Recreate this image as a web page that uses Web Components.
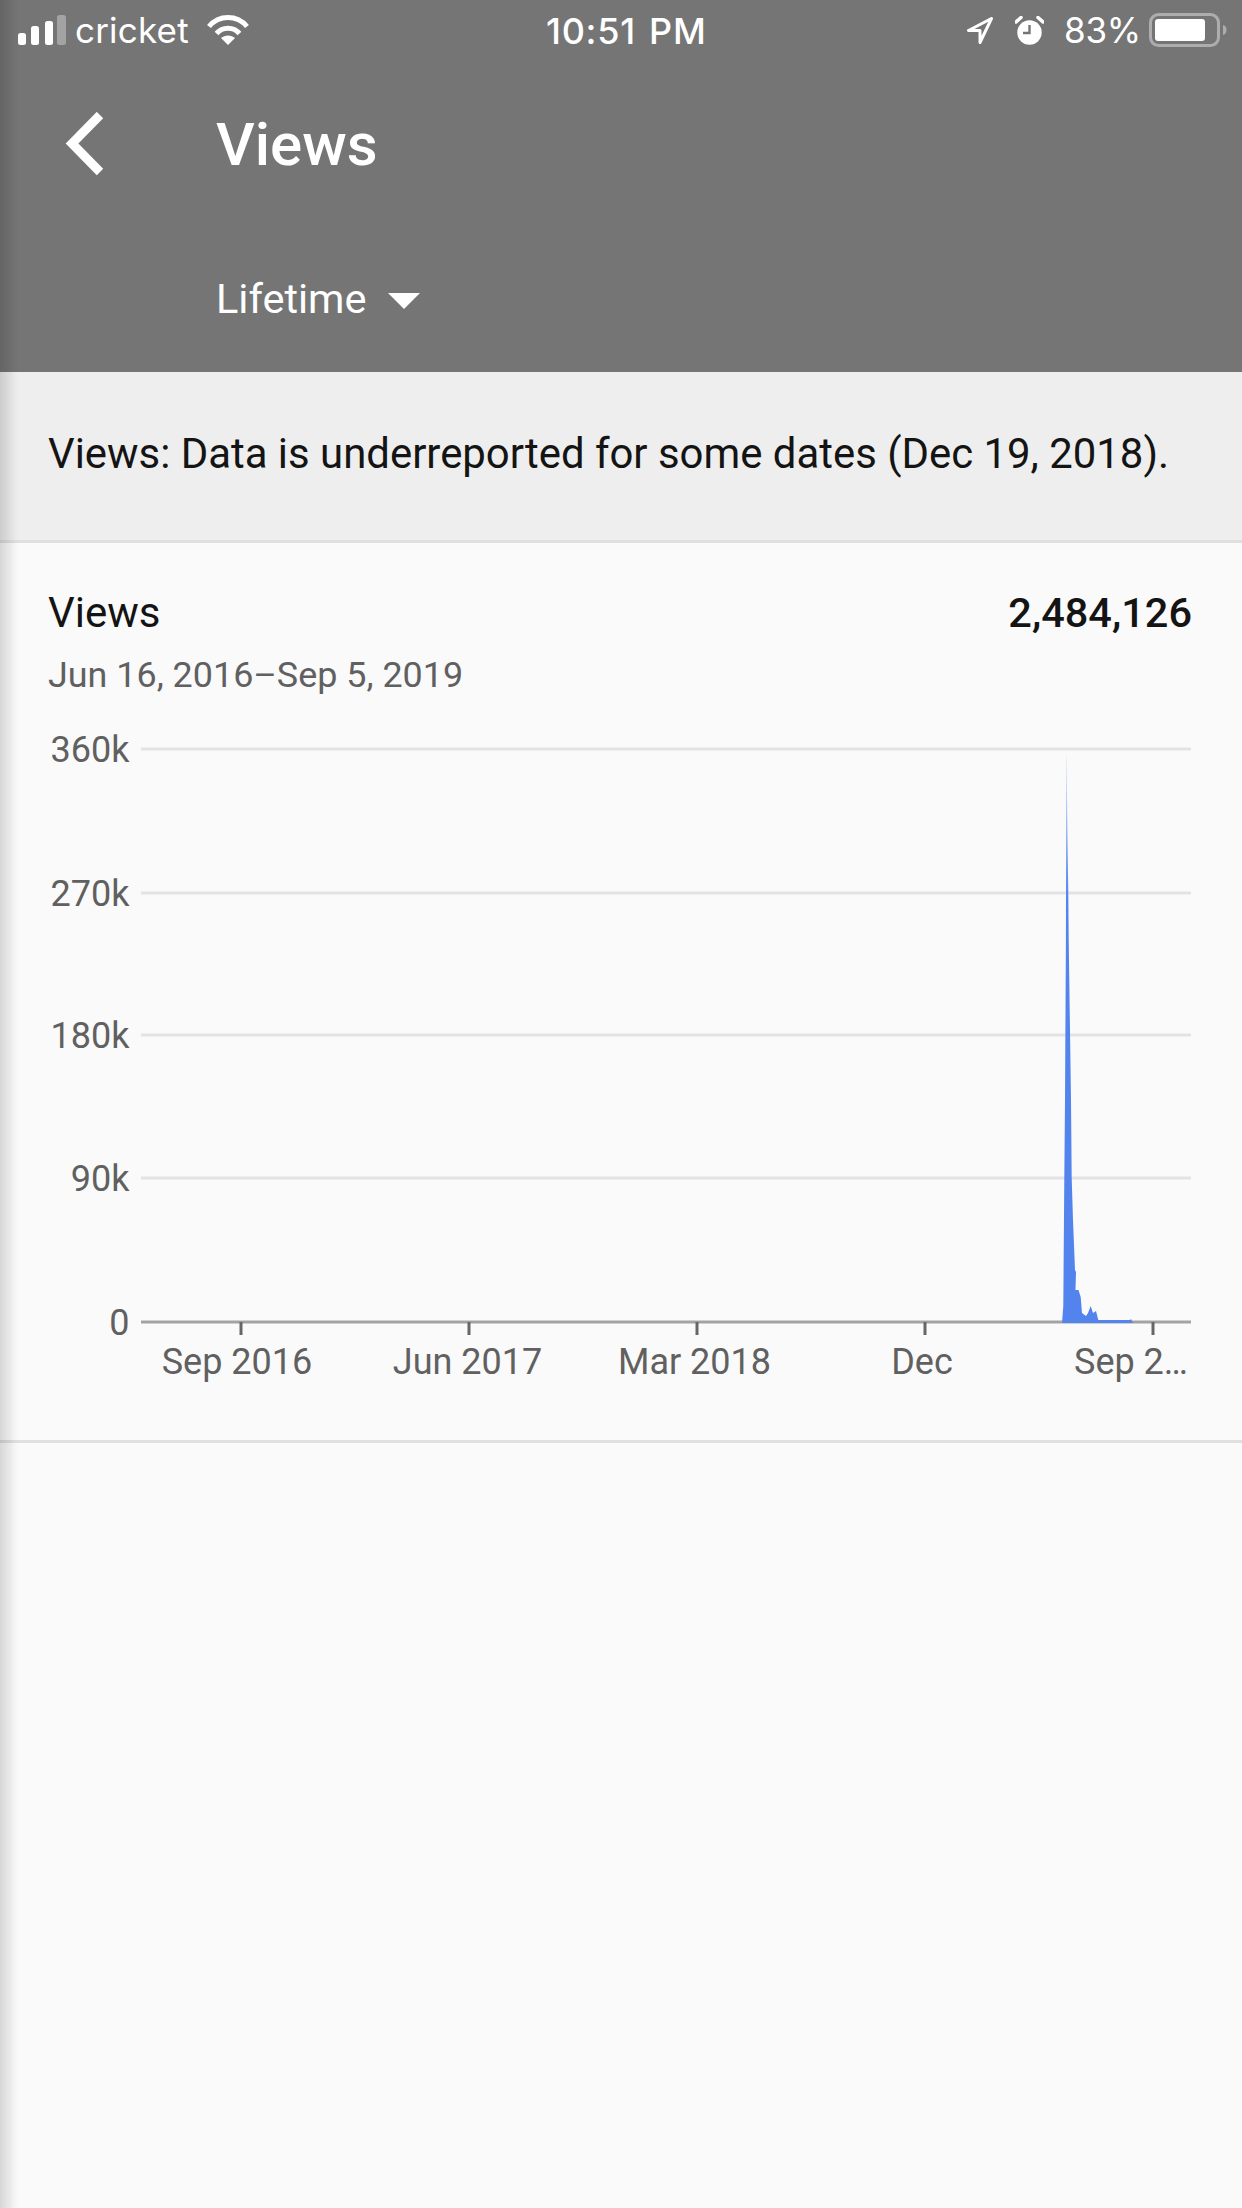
<!DOCTYPE html>
<html lang="en"><head><meta charset="utf-8"><title>Views</title>
<style>
html,body{margin:0;padding:0;background:#fafafa}
body{width:1242px;height:2208px;overflow:hidden;position:relative;font-family:Roboto,"Liberation Sans",sans-serif}
</style></head><body>
<app-screen>
  <status-bar slot="status" carrier="cricket" time="10:51 PM" battery="83%"></status-bar>
  <app-header slot="header" title="Views" range="Lifetime"></app-header>
  <notice-banner>Views: Data is underreported for some dates (Dec 19, 2018).</notice-banner>
  <stat-card label="Views" value="2,484,126" dates="Jun 16, 2016–Sep 5, 2019"><views-chart></views-chart></stat-card>
</app-screen>
<script>
function def(name, html){
  customElements.define(name, class extends HTMLElement{
    constructor(){super();this.attachShadow({mode:'open'});}
    connectedCallback(){this.shadowRoot.innerHTML=html(this);}
  });
}
def('app-screen',()=>`<style>
:host{display:block;position:relative;width:1242px;height:2208px;background:#fafafa}
.top{background:#757575}
.edge{position:absolute;left:0;top:0;bottom:0;width:20px;pointer-events:none;background:linear-gradient(90deg,rgba(0,0,0,.14),rgba(0,0,0,.09) 35%,rgba(0,0,0,.02) 75%,rgba(0,0,0,0))}
</style><div class="top"><slot name="status"></slot><slot name="header"></slot></div><slot></slot><div class="edge"></div>`);
def('status-bar',h=>`<style>
:host{display:flex;align-items:center;height:60px;padding:0 15px 0 18px;box-sizing:border-box;position:relative;color:#fff;font:400 35px Inter,Roboto,sans-serif}
.l,.r{display:flex;align-items:center}
.l{flex:1}.r{flex:1;justify-content:flex-end}
.t{font-weight:500;font-size:36px;letter-spacing:.7px;word-spacing:3px;white-space:nowrap;position:absolute;left:546px;top:9px}
svg{display:block}
.car{margin:0 18px 0 9px;letter-spacing:.2px}
.pct{margin:0 8px 0 20px;letter-spacing:-.2px}
</style>
<div class="l">
<svg width="48" height="30" viewBox="0 0 48 30"><rect x="0" y="18" width="8" height="12" rx="2.5" fill="#fff"/><rect x="13" y="11" width="8" height="19" rx="2.5" fill="#fff"/><rect x="27" y="6" width="8" height="24" rx="2.5" fill="#fff"/><rect x="39" y="0" width="9" height="30" rx="2.5" fill="#a3a3a3"/></svg>
<span class="car">${h.getAttribute('carrier')}</span>
<svg width="42" height="30" viewBox="0 0 42 30" fill="none" stroke="#fff" stroke-width="5"><path d="M2 11.5C12-.5 30-.5 40 11.5"/><path d="M9.5 18.5C15.500 11.500 26.500 11.500 32.500 18.500"/><path d="M21 30l-7-7c4-3.500 10-3.500 14 0z" fill="#fff" stroke="none"/></svg>
</div>
<div class="t">${h.getAttribute('time')}</div>
<div class="r">
<svg width="26" height="27" viewBox="0 0 26 27" fill="none" stroke="#fff" stroke-width="3" stroke-linejoin="round"><path d="M24.500 1.500L1.500 13.500H13V25.500Z"/></svg>
<svg style="margin-left:22px" width="29" height="29" viewBox="0 0 29 29"><circle cx="14.500" cy="16.500" r="12.200" fill="#fff"/><path d="M14.500 9v8H8" fill="none" stroke="#757575" stroke-width="2.400"/><path d="M1 6L6 1.500M28 6L23 1.500" stroke="#fff" stroke-width="3.500" stroke-linecap="round"/></svg>
<span class="pct">${h.getAttribute('battery')}</span>
<svg width="78" height="34" viewBox="0 0 78 34"><rect x="1.500" y="1.500" width="68" height="31" rx="8" fill="none" stroke="#adadad" stroke-width="3"/><rect x="6" y="6" width="50" height="22" rx="3" fill="#fff"/><path d="M74 12c2.500.5 3.500 2.500 3.500 5s-1 4.500-3.500 5z" fill="#adadad"/></svg>
</div>`);
def('app-header',h=>`<style>
:host{display:block;height:312px;box-sizing:border-box;padding-top:42px;color:#fff;position:relative}
.row1{display:flex;align-items:center;height:84px}
.back{width:216px;display:flex;padding-left:64px;box-sizing:border-box}
svg{display:block}
.title{font:500 60px Roboto,sans-serif}
.row2{display:flex;align-items:center;margin:77px 0 0 216px;height:70px;font:400 41.500px Roboto,sans-serif}
.row2 svg{margin:5px 0 0 22px}
</style>
<div class="row1"><div class="back"><svg width="44" height="64" viewBox="0 0 44 64" fill="none" stroke="#fff" stroke-width="9"><path d="M36 3L8 31.500 36 60"/></svg></div><div class="title">${h.getAttribute('title')}</div></div>
<div class="row2"><span>${h.getAttribute('range')}</span><svg width="32" height="16" viewBox="0 0 32 16"><path d="M0 0h32L16 16z" fill="#fff"/></svg></div>`);
def('notice-banner',()=>`<style>
:host{display:flex;align-items:center;box-sizing:border-box;height:171px;padding:0 48px 6px;background:#eee;border-bottom:3px solid #e0e0e0;color:#141414;font:400 41.900px Roboto,sans-serif;white-space:nowrap}
</style><slot></slot>`);
def('stat-card',h=>`<style>
:host{display:block;height:900px;box-sizing:border-box;border-bottom:3px solid #e0e0e0;padding:42px 50px 0 48px;background:#fafafa}
.row{display:flex;justify-content:space-between;align-items:baseline;font:400 42px/56px Roboto,sans-serif;color:#141414}
.val{font-weight:500;font-size:41.500px}
.dates{font:400 35.900px/50px Roboto,sans-serif;color:#606060;margin-top:9px}
</style>
<div class="row"><span>${h.getAttribute('label')}</span><span class="val">${h.getAttribute('value')}</span></div>
<div class="dates">${h.getAttribute('dates')}</div><slot></slot>`);
def('views-chart',()=>{
  const ys=[[749,'360k'],[893,'270k'],[1035,'180k'],[1178,'90k']];
  const off=642; // svg top in page coordinates
  const xl=[[237,'Sep 2016'],[467.500,'Jun 2017'],[694.500,'Mar 2018'],[922,'Dec'],[1074,'Sep 2…']];
  const g=ys.map(([y,t])=>`<rect x="141" y="${y-1.5-off}" width="1050" height="3" fill="#e3e3e3"/><text x="129.500" y="${y+13-off}" text-anchor="end">${t}</text>`).join('');
  const ticks=[241,469,697,925,1153].map(x=>`<rect x="${x-1.5}" y="${1322-off}" width="3" height="13" fill="#666"/>`).join('');
  const lab=xl.map(([x,t],i)=>`<text x="${x}" y="${1374-off}" text-anchor="${i==4?'start':'middle'}">${t}</text>`).join('');
  const P=[[1062,1323],[1063.3,1306],[1063.8,1240],[1064.3,1178],[1065,1100],[1065.9,940],[1066,893],[1066.2,760],[1066.4,752],[1066.6,760],[1067.4,830],[1068.3,893],[1068.7,940],[1071,1100],[1071.7,1178],[1073,1220],[1075,1270],[1076,1272],[1075.5,1290],[1078.5,1290],[1080.7,1297],[1082,1313],[1086,1316],[1088,1313],[1090.7,1306],[1093,1313],[1096,1311],[1098.3,1320],[1130,1320],[1131,1319],[1133,1323]];
  const d='M'+P.map(p=>[p[0],p[1]-off].join(' ')).join('L')+'Z';
  return `<style>
:host{display:block;position:absolute;left:0;top:${off}px;width:1242px;height:760px}
svg{display:block}text{font:400 36px Roboto,sans-serif;fill:#606060}
</style><svg width="1242" height="760" viewBox="0 0 1242 760"><defs><linearGradient id="spike" gradientUnits="userSpaceOnUse" x1="0" y1="${752-off}" x2="0" y2="${900-off}"><stop offset="0" stop-color="#5384ee" stop-opacity=".2"/><stop offset="1" stop-color="#5384ee"/></linearGradient></defs>${g}
<rect x="141" y="${1320.5-off}" width="1050" height="3" fill="#a3a3a3"/>${ticks}
<path d="${d}" fill="url(#spike)"/>
<text x="129.500" y="${1335-off}" text-anchor="end">0</text>${lab}</svg>`;
});
</script>
</body></html>
